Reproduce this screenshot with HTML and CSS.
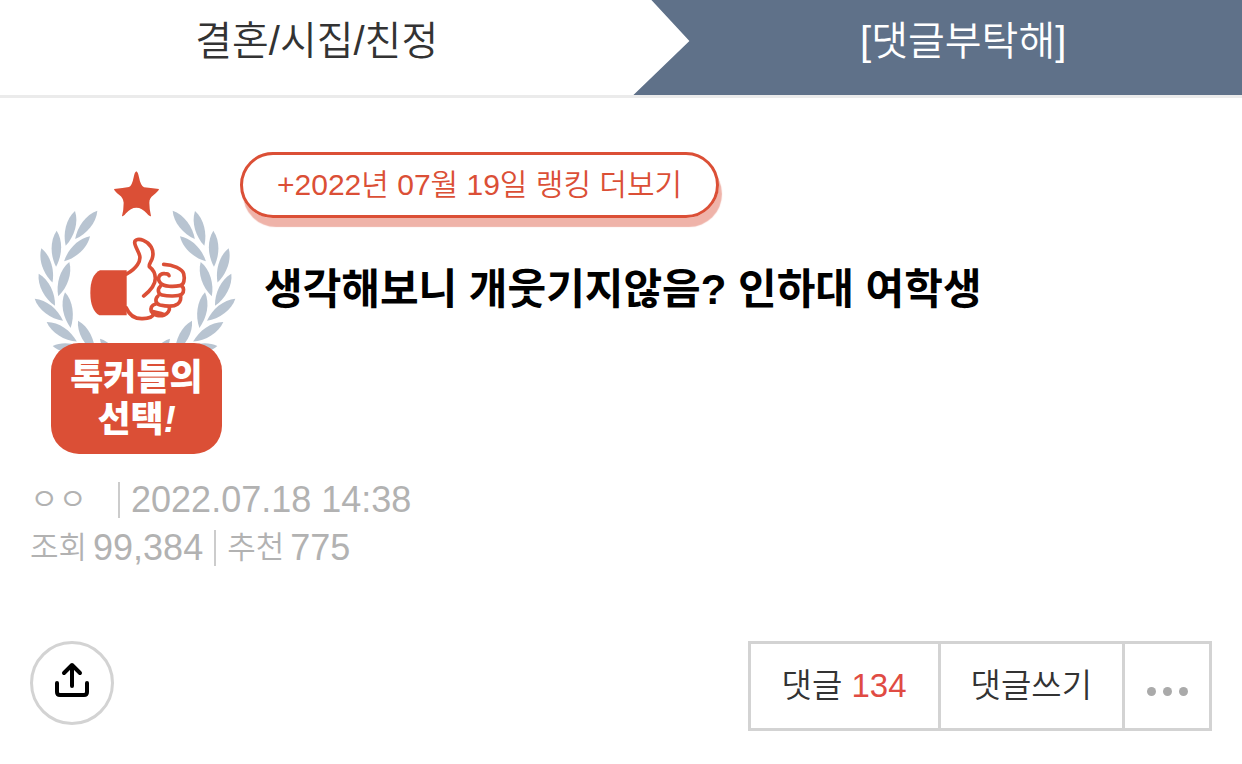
FILE: index.html
```html
<!DOCTYPE html>
<html lang="ko">
	<head>
		<meta charset="utf-8">
		<meta name="viewport" content="width=device-width, initial-scale=1">
		<title>생각해보니 개웃기지않음? 인하대 여학생</title>
		<link rel="stylesheet" href="styles.css">
	</head>
	<body>
		<nav class="path">
			<a class="path-category" href="#">결혼/시집/친정</a>
			<a class="path-board" href="#">[댓글부탁해]</a>
		</nav>

		<main class="post">
			<header class="post-head">
				<div class="badge">
					<svg class="badge-art" viewBox="30 0 630 600" aria-hidden="true">
						<defs>
							<path id="leaf" d="M0 0C30 -20 75 -18 108 0C75 18 30 20 0 0Z"/>
							<g id="laurel">
								<use href="#leaf" transform="translate(165 153) rotate(105)"/>
								<use href="#leaf" transform="translate(232 152) rotate(128)"/>
								<use href="#leaf" transform="translate(110 212) rotate(91)"/>
								<use href="#leaf" transform="translate(210 229) rotate(136)"/>
								<use href="#leaf" transform="translate(64 265) rotate(72)"/>
								<use href="#leaf" transform="translate(148 306) rotate(108)"/>
								<use href="#leaf" transform="translate(56 341) rotate(63)"/>
								<use href="#leaf" transform="translate(44 416) rotate(38)"/>
								<use href="#leaf" transform="translate(135 397) rotate(81)"/>
								<use href="#leaf" transform="translate(80 486) rotate(33)"/>
								<use href="#leaf" transform="translate(174 482) rotate(62)"/>
								<use href="#leaf" transform="translate(240 536) rotate(50)"/>
								<use href="#leaf" transform="translate(98 558) rotate(8)"/>
							</g>
						</defs>
						<g fill="#b8c4d1">
							<use href="#laurel"/>
							<use href="#laurel" transform="translate(690 0) scale(-1 1)"/>
						</g>
						<path fill="#db4f36" d="M349 34Q354 36 357 52Q362 78 372 82Q390 84 417 87Q416 93 400 106Q388 114 388 128Q388 148 393 168Q388 171 380 160Q366 143 349 143Q332 143 318 160Q310 171 306 168Q311 150 311 128Q310 114 298 105Q283 93 282 87Q310 84 327 81Q336 78 341 52Q344 36 349 34Z"/>
						<path fill="#db4f36" d="M320 331H240Q211 345 211 398Q211 450 238 466H320Z"/>
						<g transform="translate(150 195)" fill="none" stroke="#db4f36" stroke-width="11" stroke-linecap="round" stroke-linejoin="round">
							<path d="M170 147C200 130 213 108 209 92C206 80 195 65 194 53C194 42 208 41 220 46C242 55 252 75 248 95C246 108 236 115 238 125C249 133 256 146 256 160C256 180 238 200 221 213"/>
							<path d="M169 249C180 275 200 282 218 281C234 281 248 276 250 268"/>
							<path d="M281 118C310 119 337 132 341 146C345 162 342 180 330 182C310 186 282 185 272 175C258 160 270 144 284 146C290 146 296 148 297 152"/>
							<path d="M271 184C262 192 263 207 276 210C294 214 324 215 336 207C343 200 342 188 334 181"/>
							<path d="M264 213C254 222 256 236 270 240C288 244 312 245 323 237C332 230 334 218 331 211"/>
							<path d="M257 237C244 240 241 250 244 259C257 264 270 262 282 269M244 259C252 272 270 275 283 270C293 266 300 256 298 247"/>
						</g>
					</svg>
					<strong class="badge-label">톡커들의<br>선택<em>!</em></strong>
				</div>
				<div class="post-info">
					<a class="ranking" href="#">+2022년 07월 19일 랭킹 더보기</a>
					<h1 class="title">생각해보니 개웃기지않음? 인하대 여학생</h1>
				</div>
			</header>

			<div class="meta">
				<p class="meta-row">
					<span class="writer">ㅇㅇ</span>
					<span class="bar"></span>
					<time class="num" datetime="2022-07-18T14:38">2022.07.18 14:38</time>
				</p>
				<p class="meta-row">
					<span>조회</span>
					<span class="num">99,384</span>
					<span class="bar"></span>
					<span>추천</span>
					<span class="num">775</span>
				</p>
			</div>

			<div class="actions">
				<button class="share" type="button" aria-label="공유">
					<svg width="36" height="36" viewBox="0 0 36 36" fill="none" stroke="#000" stroke-width="4" stroke-linecap="round" stroke-linejoin="round" aria-hidden="true">
						<path d="M3 21V30Q3 33 6 33H30Q33 33 33 30V21M18 24V3M10 11L18 3L26 11"/>
					</svg>
				</button>
				<div class="buttons">
					<button class="btn" type="button">댓글 <span class="count">134</span></button>
					<button class="btn" type="button">댓글쓰기</button>
					<button class="btn btn-more" type="button" aria-label="더보기">
						<i class="dot"></i><i class="dot"></i><i class="dot"></i>
					</button>
				</div>
			</div>
		</main>
	</body>
</html>
```
FILE: styles.css
```css
*{margin: 0; padding: 0; box-sizing: border-box;}
body{background: #fff; color: #333; font-family: "Liberation Sans", "Noto Sans CJK KR", sans-serif; font-weight: 350;}
a{color: inherit; text-decoration: none;}
button{background: #fff; color: inherit; font: inherit; cursor: pointer;}

/* category path */
.path{display: flex; border-bottom: 3px solid #ebebeb; font-size: 40px; line-height: 82px; text-align: center;}
.path a{height: 95px;}
.path-category{width: 51%;}
.path-board{flex: 1; padding-left: 51px; background: #5f7189; color: #fff; clip-path: polygon(18px 0, 100% 0, 100% 100%, 0 100%, 56px 41px);}

.post{padding: 54px 30px 30px;}
.post-head{display: flex;}

/* ranking badge */
.badge{width: 210px; padding-top: 8px;}
.badge-art{display: block; width: 210px; height: 200px;}
.badge-label{display: block; position: relative; width: 171px; margin: -17px 0 0 21px; padding: 14px 0 13px; border-radius: 28px; background: #db4f36; color: #fff; font-size: 36px; font-weight: 900; line-height: 42px; text-align: center;}

.post-info{flex: 1;}
.ranking{display: inline-block; padding: 0 34px; border: 3px solid #db4f36; border-radius: 33px; box-shadow: 3px 9px 1px #efb3a9; color: #db4f36; font-size: 30px; line-height: 60px;}
.title{margin: 42px 0 0 24px; color: #000; font-size: 42px; font-weight: bold; line-height: 60px;}

.meta{margin-top: 22px; color: #b2b2b2; font-size: 31px; line-height: 48px;}
.meta-row{display: flex; align-items: center; gap: 6px;}
.num{font-size: 36px;}
.writer{margin-right: 20px;}
.bar{width: 2px; height: 36px; margin: 0 5px; background: #ccc;}

.actions{display: flex; justify-content: space-between; align-items: flex-start; margin-top: 69px;}
.share{display: flex; align-items: center; justify-content: center; width: 84px; height: 84px; padding-bottom: 6px; border: 3px solid #d3d3d3; border-radius: 50%;}
.buttons{display: flex; border: 3px solid #d3d3d3;}
.btn{height: 84px; padding: 0 30px 6px; border: 0; font-size: 33px;}
.btn:first-child{padding: 0 31px 6px;}
.btn + .btn{border-left: 3px solid #d3d3d3;}
.count{color: #e04b43;}
.btn-more{display: flex; align-items: center; justify-content: center; gap: 7px; width: 87px; padding: 10px 0 0;}
.dot{width: 9px; height: 9px; border-radius: 50%; background: #aaa;}
```
